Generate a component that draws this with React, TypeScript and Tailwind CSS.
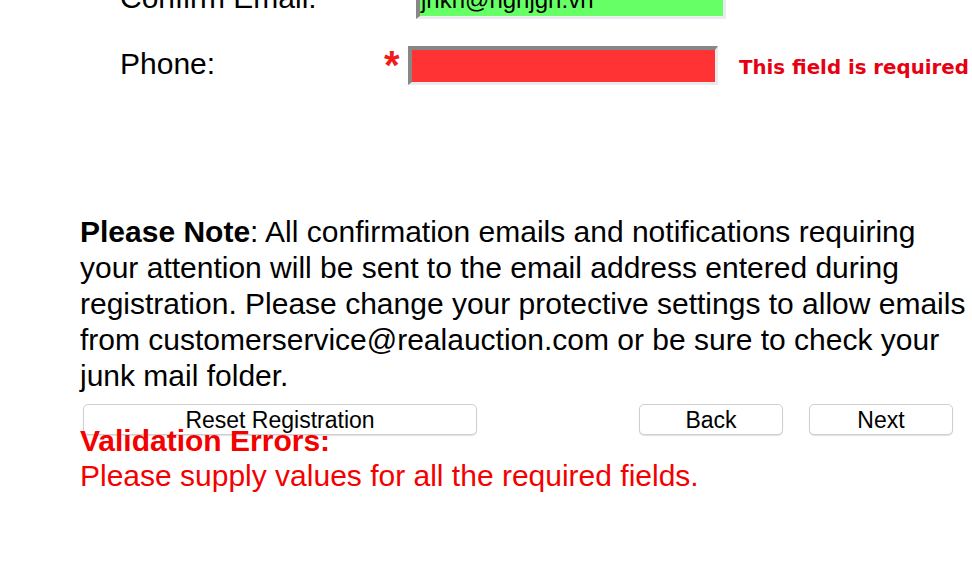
const font = { fontFamily: '"Liberation Sans", Arial, Helvetica, sans-serif' };

function Field({
  label,
  value,
  fill,
  inputOffset,
  error,
}: {
  label: string;
  value?: string;
  fill: string;
  inputOffset: string;
  error?: string;
}) {
  return (
    <div className="flex h-[39px] items-center">
      <div className="-mt-[3px] w-[265px] text-[30px] leading-[36px] text-black">{label}</div>
      <div className="relative h-full w-[23px]">
        <span className="absolute left-[-1px] top-[0px] text-[40px] font-bold leading-[38px] text-[#f21b1b]">*</span>
      </div>
      <div
        className={`flex h-[39px] w-[310px] items-center border-[3px] border-t-[4px] border-l-[4px] border-t-[#878787] border-l-[#878787] border-r-[#ebebef] border-b-[#ebebef] pl-[1px] text-[24px] text-black ${fill} ${inputOffset}`}
      >
        {value}
      </div>
      {error && (
        <div
          className="ml-[21px] mt-[5px] whitespace-nowrap text-[19.8px] font-bold text-[#e60012]"
          style={{ fontFamily: 'Verdana, "DejaVu Sans", sans-serif' }}
        >
          {error}
        </div>
      )}
    </div>
  );
}

export default function App() {
  return (
    <div className="h-[564px] w-[972px] overflow-hidden bg-white" style={font}>
      <div className="-mt-[20px]">
        <div className="flex flex-col gap-[27px] pl-[120px]">
          <Field label="Confirm Email:" value="jnkn@nghjgh.vn" fill="bg-[#66ff66]" inputOffset="ml-[8px]" />
          <Field label="Phone:" fill="bg-[#ff3333]" inputOffset="ml-0" error="This field is required" />
        </div>

        <p className="mt-[129px] pl-[80px] pr-[4px] text-[30px] leading-[36px] text-black">
          <b>Please Note</b>: All confirmation emails and notifications requiring your attention will be sent to
          the email address entered during registration. Please change your protective settings to allow emails
          from customerservice@realauction.com or be sure to check your junk mail folder.
        </p>

        <div className="mt-[10px] flex items-center pl-[83px] text-[23px] text-black">
          <button className="h-[31px] w-[394px] rounded-[5px] border border-[#cfcfcf] bg-white pt-[2px] leading-none shadow-[0_1px_1px_rgba(0,0,0,0.12)]">
            Reset Registration
          </button>
          <button className="ml-[162px] h-[31px] w-[144px] rounded-[5px] border border-[#cfcfcf] bg-white pt-[2px] leading-none shadow-[0_1px_1px_rgba(0,0,0,0.12)]">
            Back
          </button>
          <button className="ml-[26px] h-[31px] w-[144px] rounded-[5px] border border-[#cfcfcf] bg-white pt-[2px] leading-none shadow-[0_1px_1px_rgba(0,0,0,0.12)]">
            Next
          </button>
        </div>

        <div className="relative -mt-[12px] pl-[80px] text-[30px] leading-[35px] text-[#f40000]">
          <div className="font-bold">Validation Errors:</div>
          <div>Please supply values for all the required fields.</div>
        </div>
      </div>
    </div>
  );
}
